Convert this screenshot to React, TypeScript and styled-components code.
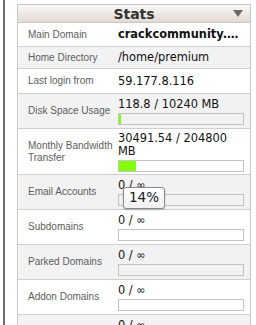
import React from "react";
import styled, { createGlobalStyle } from "styled-components";

const GlobalStyle = createGlobalStyle`
  html, body {
    margin: 0;
    padding: 0;
    background: #fff;
    height: 325px;
    overflow: hidden;
  }
`;

const Frame = styled.div`
  display: flex;
  height: 325px;
  padding-left: 3px;
`;

const Column = styled.div`
  width: 234px;
  border-left: 2px solid #6f6f6f;
  border-right: 1px solid #dcdcdc;
  padding: 4px 13px 0 12px;
`;

const Panel = styled.div`
  border: 1px solid #c8c8c8;
  background: #fff;
`;

const Header = styled.div`
  position: relative;
  height: 17px;
  display: flex;
  align-items: center;
  justify-content: center;
  background: linear-gradient(#fbf9f8, #e3d9d2);
  border-bottom: 1px solid #c8c8c8;
  font-family: "DejaVu Sans", Verdana, sans-serif;
  font-weight: bold;
  font-size: 14px;
  color: #333;
`;

const Arrow = styled.span`
  position: absolute;
  right: 7px;
  top: 5px;
  width: 0;
  height: 0;
  border-left: 5px solid transparent;
  border-right: 5px solid transparent;
  border-top: 7px solid #6a6a6a;
`;

const Row = styled.div<{ $shaded: boolean; $h: number }>`
  display: flex;
  align-items: center;
  height: ${(p) => p.$h}px;
  background: ${(p) => (p.$shaded ? "#f2f2f2" : "#fff")};
  border-bottom: 1px solid #cfcfcf;
`;

const Label = styled.div`
  width: 90px;
  padding-left: 10px;
  flex-shrink: 0;
  font-family: "Liberation Sans", Arial, sans-serif;
  font-size: 10px;
  line-height: 12px;
  color: #5d5d5d;
`;

const Value = styled.div<{ $bold?: boolean }>`
  flex: 1;
  min-width: 0;
  padding-right: 6px;
  font-family: "DejaVu Sans", Verdana, sans-serif;
  font-size: 11.4px;
  line-height: 13px;
  color: #111;
  font-weight: ${(p) => (p.$bold ? "bold" : "normal")};
  white-space: ${(p) => (p.$bold ? "nowrap" : "normal")};
  overflow: hidden;
  text-overflow: ellipsis;
`;

const Stack = styled.div`
  position: relative;
  flex: 1;
  padding-right: 6px;
  display: flex;
  flex-direction: column;
  gap: 2px;
  font-family: "DejaVu Sans", Verdana, sans-serif;
  font-size: 11.4px;
  line-height: 13px;
  color: #111;
`;

const Bar = styled.div`
  height: 10px;
  border: 1px solid #c3c3c3;
  background: transparent;
`;

const Fill = styled.div`
  height: 100%;
  min-width: 2px;
  background: #84ff00;
`;

const Tip = styled.div`
  position: absolute;
  left: 5px;
  top: 8px;
  padding: 0 5px;
  height: 20px;
  display: flex;
  align-items: center;
  border: 1px solid #8a8a8a;
  border-radius: 3px;
  background: linear-gradient(#ffffff, #f1f1f1);
  box-shadow: 0 1px 2px rgba(0, 0, 0, 0.2);
  font-family: "DejaVu Sans", Verdana, sans-serif;
  font-size: 13.5px;
  color: #222;
`;

type Stat = {
  label: string;
  value: string;
  pct?: number;
  bold?: boolean;
  h: number;
  tip?: string;
};

const stats: Stat[] = [
  { label: "Main Domain", value: "crackcommunity.com", bold: true, h: 23 },
  { label: "Home Directory", value: "/home/premium", h: 21 },
  { label: "Last login from", value: "59.177.8.116", h: 24 },
  { label: "Disk Space Usage", value: "118.8 / 10240 MB", pct: 1, h: 34 },
  { label: "Monthly Bandwidth Transfer", value: "30491.54 / 204800 MB", pct: 14, h: 45 },
  { label: "Email Accounts", value: "0 / ∞", pct: 0, h: 34, tip: "14%" },
  { label: "Subdomains", value: "0 / ∞", pct: 0, h: 34 },
  { label: "Parked Domains", value: "0 / ∞", pct: 0, h: 34 },
  { label: "Addon Domains", value: "0 / ∞", pct: 0, h: 34 },
  { label: "MySQL Databases", value: "0 / ∞", pct: 0, h: 34 },
];

export default function App() {
  return (
    <>
      <GlobalStyle />
      <Frame>
        <Column>
          <Panel>
            <Header>
              Stats
              <Arrow />
            </Header>
            {stats.map((s, i) => (
              <Row key={s.label} $shaded={i % 2 === 1} $h={s.h}>
                <Label>{s.label}</Label>
                {s.pct === undefined ? (
                  <Value $bold={s.bold}>{s.value}</Value>
                ) : (
                  <Stack>
                    <span>{s.value}</span>
                    <Bar>
                      {s.pct > 0 && <Fill style={{ width: `${s.pct}%` }} />}
                    </Bar>
                    {s.tip && <Tip>{s.tip}</Tip>}
                  </Stack>
                )}
              </Row>
            ))}
          </Panel>
        </Column>
      </Frame>
    </>
  );
}
